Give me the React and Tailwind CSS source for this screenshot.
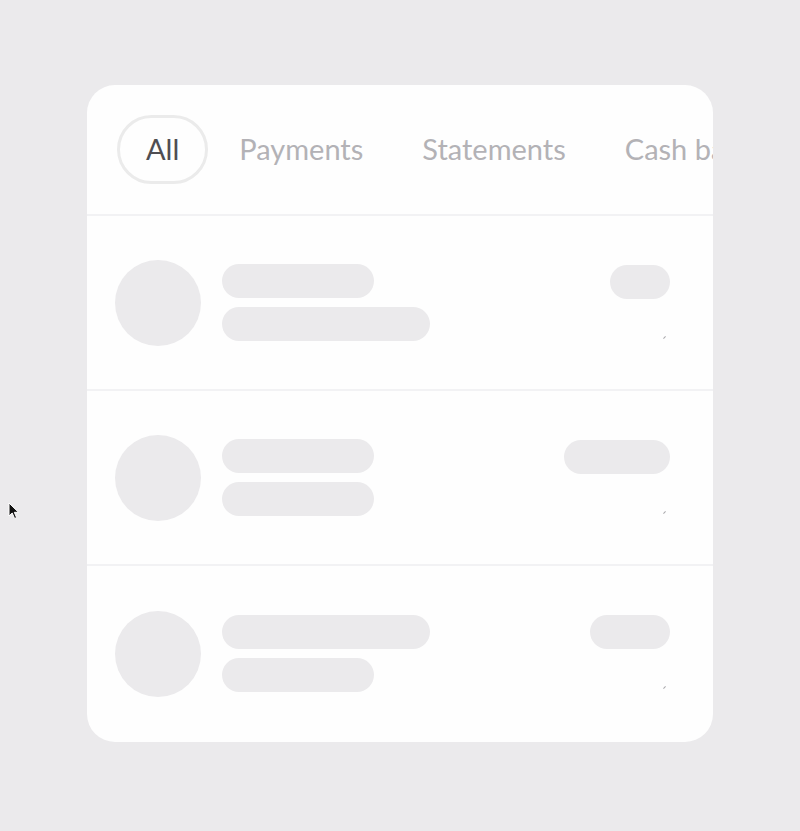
import React from "react";

const TABS = ["All", "Payments", "Statements", "Cash back", "Cards"];

const ROWS = [
  { top: "w-[152px]", bottom: "w-[208px]", right: "w-[60px]" },
  { top: "w-[152px]", bottom: "w-[152px]", right: "w-[106px]" },
  { top: "w-[208px]", bottom: "w-[152px]", right: "w-[80px]" },
];

const Cursor = () => (
  <svg
    className="absolute left-[8px] top-[502px]"
    width="12"
    height="18"
    viewBox="0 0 12 18"
  >
    <path
      d="M1 1 L1 14 L4.2 11 L6.6 16.5 L8.6 15.6 L6.3 10.3 L10.5 10.3 Z"
      fill="#111"
      stroke="#fff"
      strokeWidth="1"
    />
  </svg>
);

const SkeletonRow = ({ row, last }) => (
  <div
    className={`flex items-center h-[175px] pl-[28px] pr-[43px] ${
      last ? "" : "border-b-2 border-[#f2f2f4]"
    }`}
  >
    <div className="w-[86px] h-[86px] rounded-full bg-[#ebeaec] shrink-0" />
    <div className="flex flex-col gap-[9px] ml-[21px]">
      <div className={`h-[34px] rounded-full bg-[#ebeaec] ${row.top}`} />
      <div className={`h-[34px] rounded-full bg-[#ebeaec] ${row.bottom}`} />
    </div>
    <div className="ml-auto self-stretch flex flex-col items-end pt-[49px]">
      <div className={`h-[34px] rounded-full bg-[#ebeaec] ${row.right}`} />
      {/* tiny leftover tick under the amount */}
      <div className="mt-[38px] mr-[4px] w-[3px] h-[1px] bg-[#a9a8ac] -rotate-45" />
    </div>
  </div>
);

export default function App() {
  return (
    <div
      className="relative w-[800px] h-[831px] bg-[#ebeaec] pt-[85px] pl-[87px]"
      style={{ fontFamily: "Lato, 'Noto Sans', sans-serif" }}
    >
      <Cursor />
      <div className="w-[626px] h-[657px] bg-[#fefefe] rounded-[28px] overflow-hidden">
        <div className="flex items-center gap-[3px] h-[131px] pl-[30px] pb-[1px] border-b-2 border-[#f2f2f4] whitespace-nowrap overflow-hidden">
          {TABS.map((tab, i) =>
            i === 0 ? (
              <div
                key={tab}
                className="h-[69px] px-[26px] rounded-full border-[3px] border-[#ebebeb] flex items-center text-[29px] text-[#4f4e52] shrink-0"
              >
                {tab}
              </div>
            ) : (
              <div
                key={tab}
                className="h-[69px] px-[28px] flex items-center text-[29px] text-[#b3b2b6] shrink-0"
              >
                {tab}
              </div>
            )
          )}
        </div>
        {ROWS.map((row, i) => (
          <SkeletonRow key={i} row={row} last={i === ROWS.length - 1} />
        ))}
      </div>
    </div>
  );
}
